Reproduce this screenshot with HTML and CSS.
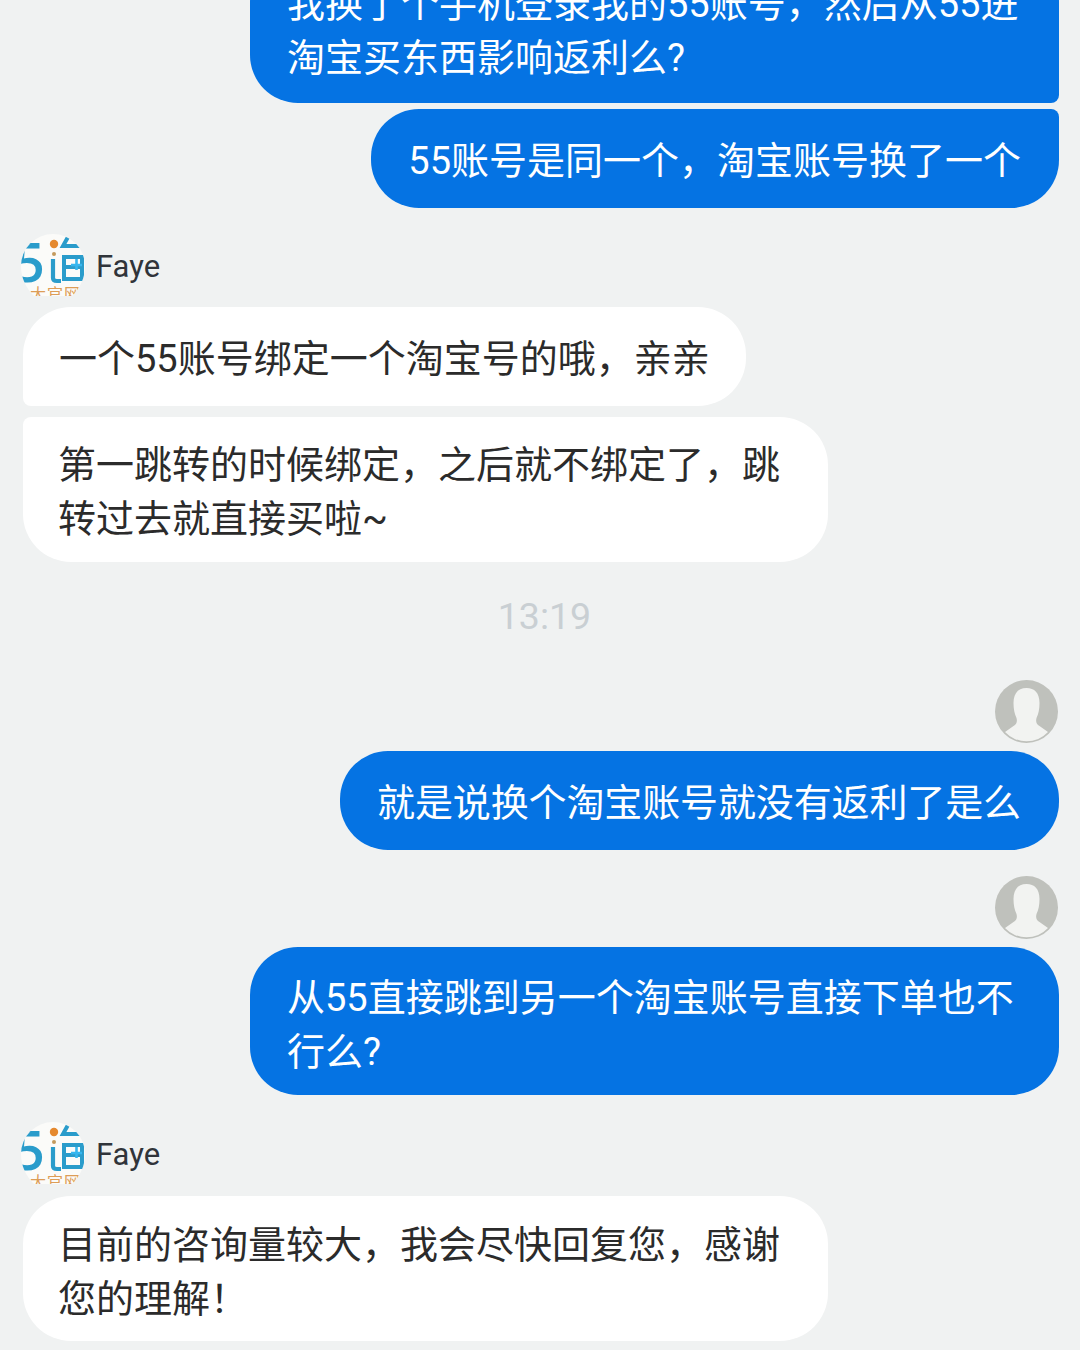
FILE: index.html
```html
<!DOCTYPE html>
<html lang="zh-CN">
<head>
<meta charset="utf-8">
<title>在线客服</title>
<link rel="stylesheet" href="styles.css">
</head>
<body>
<svg class="defs" width="0" height="0" aria-hidden="true">
  <defs>
    <clipPath id="logo-round">
      <path d="M0 32a32 32 0 0 1 64 0c0 12-5 22-13 30H13C5 54 0 44 0 32z"/>
    </clipPath>
    <symbol id="agent-logo" viewBox="0 0 64 64">
      <g clip-path="url(#logo-round)">
        <rect width="64" height="64" fill="#fbfbf9"/>
        <text x="-7" y="48" class="logo-five">5</text>
        <circle cx="33" cy="10" r="4.2" fill="#e5892e"/>
        <circle cx="33" cy="20" r="2" fill="#c39a5e"/>
        <path d="M32 25v19q0 3 4 3h4" fill="none" stroke="#2a9ccb" stroke-width="4.2"/>
        <path d="M47 3l-5 9h22M43 23h18v22H43zM43 33h20" fill="none" stroke="#2a9ccb" stroke-width="4"/>
        <path d="M50 31h11M55.500 25v11" fill="none" stroke="#35b6ef" stroke-width="2.600"/>
        <text x="9" y="66" class="logo-caption">大官网</text>
      </g>
    </symbol>
    <symbol id="user-silhouette" viewBox="0 0 63 63">
      <circle cx="31.500" cy="31.500" r="31.500" fill="#bfc1bc"/>
      <path d="M31.500 8c-8 0-13 5-13 15 0 6 1 11 3 15 1 4 0 6-3 8l-8.500 6A29.500 29.500 0 0 0 53 52l-8.500-6c-3-2-4-4-3-8 2-4 3-9 3-15 0-10-5-15-13-15z" fill="#f2f3f1"/>
    </symbol>
  </defs>
</svg>

<main class="chat">
  <p class="bubble mine two-line lead tail-below">我换了个手机登录我的55账号，然后从55进淘宝买东西影响返利么?</p>
  <p class="bubble mine one-line tail-above gap-6">55账号是同一个，淘宝账号换了一个</p>

  <div class="agent gap-26">
    <svg class="logo"><use href="#agent-logo"/></svg>
    <span class="agent-name">Faye</span>
  </div>
  <p class="bubble theirs one-line tail-below gap-9">一个55账号绑定一个淘宝号的哦，亲亲</p>
  <p class="bubble theirs two-line-tight tail-above gap-11">第一跳转的时候绑定，之后就不绑定了，跳转过去就直接买啦~</p>

  <time class="stamp">13:19</time>

  <svg class="user user-first"><use href="#user-silhouette"/></svg>
  <p class="bubble mine one-line snug gap-8">就是说换个淘宝账号就没有返利了是么</p>

  <svg class="user gap-26"><use href="#user-silhouette"/></svg>
  <p class="bubble mine two-line gap-8">从55直接跳到另一个淘宝账号直接下单也不行么?</p>

  <div class="agent gap-27">
    <svg class="logo"><use href="#agent-logo"/></svg>
    <span class="agent-name">Faye</span>
  </div>
  <p class="bubble theirs two-line-tight closing gap-10">目前的咨询量较大，我会尽快回复您，感谢您的理解！</p>
</main>
</body>
</html>
```

FILE: styles.css
```css
* {
  box-sizing: border-box;
}

html,
body {
  margin: 0;
  height: 1350px;
  overflow: hidden;
  background: #f0f2f2;
}

.defs {
  display: block;
  height: 0;
}

/* The conversation is scrolled, so the first bubble starts above the top edge */
.chat {
  display: flex;
  flex-direction: column;
  margin-top: -46px;
  padding: 0 21px 0 23px;
  font-family: Roboto, "Noto Sans CJK SC", sans-serif;
}

.bubble {
  margin: 0;
  font-size: 38px;
  line-height: 54px;
  border-radius: 48px;
  max-width: 809px;
}

.mine {
  align-self: flex-end;
  padding-left: 37px;
  padding-right: 38px;
  background: #0573e3;
  color: #fff;
}

.theirs {
  align-self: flex-start;
  max-width: 805px;
  padding-left: 35px;
  padding-right: 37px;
  background: #fff;
  color: #2b2b2b;
}

.one-line {
  padding-top: 25px;
  padding-bottom: 20px;
}

.theirs.one-line {
  padding-left: 36px;
  padding-right: 36px;
}

.two-line {
  padding-top: 24px;
  padding-bottom: 16px;
}

.two-line.lead {
  padding-top: 23px;
  padding-bottom: 18px;
}

.two-line-tight {
  padding-top: 21px;
  padding-bottom: 16px;
}

.two-line-tight.closing {
  padding-top: 22px;
  padding-bottom: 15px;
}

.snug {
  letter-spacing: -0.12px;
}

.mine.tail-below {
  border-bottom-right-radius: 8px;
}

.mine.tail-above {
  border-top-right-radius: 8px;
}

.theirs.tail-below {
  border-bottom-left-radius: 8px;
}

.theirs.tail-above {
  border-top-left-radius: 8px;
}

.gap-6 { margin-top: 6px; }
.gap-8 { margin-top: 8px; }
.gap-9 { margin-top: 9px; }
.gap-10 { margin-top: 10px; }
.gap-11 { margin-top: 11px; }
.gap-26 { margin-top: 26px; }
.gap-27 { margin-top: 27px; }

.agent {
  display: flex;
  align-items: center;
  gap: 11px;
  height: 64px;
  margin-left: -2px;
}

.logo {
  width: 64px;
  height: 64px;
  flex: none;
}

.logo-five {
  font: 600 54px "Open Sans", sans-serif;
  fill: #2a9ccb;
}

.logo-caption {
  font: 16px "Noto Sans CJK SC", sans-serif;
  letter-spacing: 1px;
  fill: #dd9d57;
}

.agent-name {
  font-size: 31px;
  color: #30343a;
}

.stamp {
  align-self: center;
  margin-top: 32px;
  margin-left: 7px;
  font-size: 37.500px;
  line-height: 44px;
  color: #c9cfd3;
}

.user {
  align-self: flex-end;
  width: 63px;
  height: 63px;
  flex: none;
  margin-right: 1px;
}

.user-first {
  margin-top: 42px;
}
```
